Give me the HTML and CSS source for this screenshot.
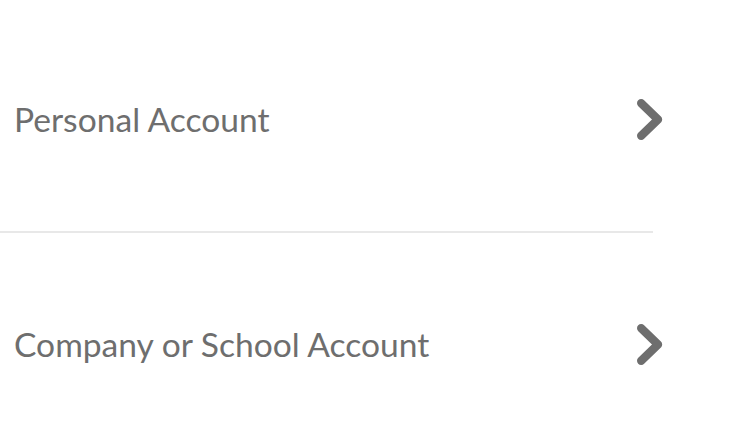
FILE: index.html
```html
<!DOCTYPE html>
<html lang="en">
<head>
<meta charset="utf-8">
<title>Account type</title>
<link rel="stylesheet" href="styles.css">
</head>
<body>
<main class="list">
  <a class="row" href="#">
    <span class="label">Personal Account</span>
    <svg class="chevron" width="26" height="41" viewBox="0 0 26 41" aria-hidden="true">
      <path d="M4.2 4.2 L21 20.5 L4.2 36.8" fill="none" stroke="currentColor" stroke-width="8.4" stroke-linecap="round" stroke-linejoin="round"/>
    </svg>
  </a>
  <div class="divider"></div>
  <a class="row" href="#">
    <span class="label">Company or School Account</span>
    <svg class="chevron" width="26" height="41" viewBox="0 0 26 41" aria-hidden="true">
      <path d="M4.2 4.2 L21 20.5 L4.2 36.8" fill="none" stroke="currentColor" stroke-width="8.4" stroke-linecap="round" stroke-linejoin="round"/>
    </svg>
  </a>
</main>
</body>
</html>
```
FILE: styles.css
```css
html, body {
  margin: 0;
  padding: 0;
  background: #ffffff;
}
body {
  font-family: Lato, "Open Sans", "Liberation Sans", sans-serif;
  color: #6e6e6e;
  overflow: hidden;
}
.list {
  display: flex;
  flex-direction: column;
  padding-top: 8px;
}
.row {
  display: flex;
  align-items: center;
  justify-content: space-between;
  width: 663px;
  height: 223px;
  box-sizing: border-box;
  padding-left: 14px;
  color: #6e6e6e;
  text-decoration: none;
}
.label {
  font-size: 33.6px;
  line-height: 1;
}
.chevron {
  display: block;
  flex: none;
  color: #6e6e6e;
}
.divider {
  width: 653px;
  height: 2px;
  background: #e8e8e8;
}
```
